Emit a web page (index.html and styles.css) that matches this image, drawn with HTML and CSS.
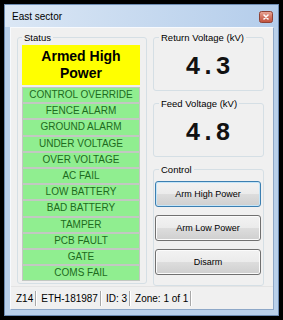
FILE: index.html
```html
<!DOCTYPE html>
<html>
<head>
<meta charset="utf-8">
<link rel="stylesheet" href="styles.css">
</head>
<body>
<div class="window">
  <div class="titlebar">
    <span class="title">East sector</span>
    <div class="close">
      <svg width="14" height="12" viewBox="0 0 14 12">
        <defs>
          <linearGradient id="cg" x1="0" y1="0" x2="0" y2="1">
            <stop offset="0" stop-color="#e9a899"/>
            <stop offset="0.5" stop-color="#d27462"/>
            <stop offset="1" stop-color="#c0503c"/>
          </linearGradient>
        </defs>
        <rect x="0.5" y="0.5" width="13" height="11" rx="2" fill="url(#cg)" stroke="#8e4236"/>
        <path d="M5 4 L9 8 M9 4 L5 8" stroke="#fff" stroke-width="1.6" stroke-linecap="round"/>
      </svg>
    </div>
  </div>
  <div class="client">
    <div class="main">
      <div class="group status">
        <div class="legend">Status</div>
        <div class="state">Armed High<br>Power</div>
        <div class="alarms">
          <div class="alarm">CONTROL OVERRIDE</div>
          <div class="alarm">FENCE ALARM</div>
          <div class="alarm">GROUND ALARM</div>
          <div class="alarm">UNDER VOLTAGE</div>
          <div class="alarm">OVER VOLTAGE</div>
          <div class="alarm">AC FAIL</div>
          <div class="alarm">LOW BATTERY</div>
          <div class="alarm">BAD BATTERY</div>
          <div class="alarm">TAMPER</div>
          <div class="alarm">PCB FAULT</div>
          <div class="alarm">GATE</div>
          <div class="alarm">COMS FAIL</div>
        </div>
      </div>
      <div class="side">
        <div class="group reading">
          <div class="legend">Return Voltage (kV)</div>
          <div class="value">4.3</div>
        </div>
        <div class="group reading">
          <div class="legend">Feed Voltage (kV)</div>
          <div class="value">4.8</div>
        </div>
        <div class="group control">
          <div class="legend">Control</div>
          <button class="btn default">Arm High Power</button>
          <button class="btn">Arm Low Power</button>
          <button class="btn">Disarm</button>
        </div>
      </div>
    </div>
    <div class="statusbar">
      <span class="sb-item">Z14</span>
      <span class="sb-item">ETH-181987</span>
      <span class="sb-item">ID: 3</span>
      <span class="sb-item">Zone: 1 of 1</span>
    </div>
  </div>
</div>
</body>
</html>
```
FILE: styles.css
```css
* { box-sizing: border-box; }
html, body { margin: 0; padding: 0; background: #000; }
body {
  width: 283px;
  height: 320px;
  overflow: hidden;
  font-family: "Liberation Sans", Arial, sans-serif;
  color: #000;
}
.window {
  margin: 4px 0 0 4px;
  width: 275px;
  height: 312px;
  background: #b9d0ea;
  border: 1px solid #6d8cb3;
  display: flex;
  flex-direction: column;
  padding: 0 4px 5px 5px;
}
.titlebar {
  height: 22px;
  margin: 0 -4px 0 -5px;
  padding: 0 5px 0 7px;
  display: flex;
  align-items: center;
  justify-content: space-between;
  background: linear-gradient(to right, #dbe7f5 0%, #c9dbf0 45%, #b4cdeb 100%);
}
.title { font-size: 10px; }
.close { width: 14px; height: 12px; display: flex; margin-top: 1px; }
.client {
  flex: 1;
  background: #f0f0f0;
  display: flex;
  flex-direction: column;
  border: 1px solid #f8fafd;
  border-bottom-color: #8ea8c8;
  border-right-color: #8ea8c8;
}
.main {
  display: flex;
  gap: 6px;
  padding: 9px 0 0 6px;
  height: 258px;
}
.group {
  border: 1px solid #d5dfe5;
  border-radius: 3px;
}
.legend {
  width: max-content;
  margin-top: -7px;
  padding: 0 2px;
  background: #f0f0f0;
  font-size: 9.5px;
  line-height: 13px;
}
.status {
  width: 130px;
  height: 247px;
  padding: 0 6px 0 4px;
}
.state {
  margin-top: 1px;
  height: 40px;
  background: #ffff00;
  display: flex;
  align-items: center;
  justify-content: center;
  text-align: center;
  font-weight: bold;
  font-size: 14px;
  line-height: 17px;
}
.alarms {
  margin-top: 2px;
  display: flex;
  flex-direction: column;
}
.alarm {
  height: 16.2px;
  border: 1px solid #c2c8c2;
  background: #90ee90;
  color: #1d6b1d;
  font-size: 10px;
  line-height: 14.2px;
  text-align: center;
}
.side {
  width: 111px;
  display: flex;
  flex-direction: column;
  gap: 12px;
}
.reading {
  height: 54px;
  padding: 0 2px 0 1px;
  display: flex;
  flex-direction: column;
}
.reading .legend, .control .legend { margin-left: 4px; }
.value {
  flex: 1;
  display: flex;
  align-items: center;
  justify-content: center;
  font-family: "Liberation Mono", "Courier New", monospace;
  font-weight: bold;
  font-size: 25px;
  color: #111;
}
.control {
  height: 117px;
  padding: 0 2px 0 1px;
  display: flex;
  flex-direction: column;
  gap: 8px;
}
.control .legend { margin-bottom: -3px; }
.btn {
  width: 106px;
  height: 26px;
  border: 1px solid #707070;
  border-radius: 3px;
  background: linear-gradient(#f2f2f2 0%, #ebebeb 50%, #dddddd 50%, #cfcfcf 100%);
  box-shadow: inset 0 0 0 1px #fbfbfb;
  font-family: "Liberation Sans", Arial, sans-serif;
  font-size: 9px;
  color: #000;
  padding: 0;
}
.btn.default {
  border-color: #3c7fb1;
  box-shadow: inset 0 0 0 1px #c4e5f8;
}
.statusbar {
  flex: 1;
  display: flex;
  align-items: center;
  padding-left: 5px;
  font-size: 10px;
  border-top: 1px solid #e4e4e4;
}
.sb-item {
  line-height: 15px;
  padding: 0 2px 0 5px;
  border-right: 1px solid #a8a8a8;
  box-shadow: 1px 0 0 #fff;
}
.sb-item:first-child { padding-left: 0; }
```
